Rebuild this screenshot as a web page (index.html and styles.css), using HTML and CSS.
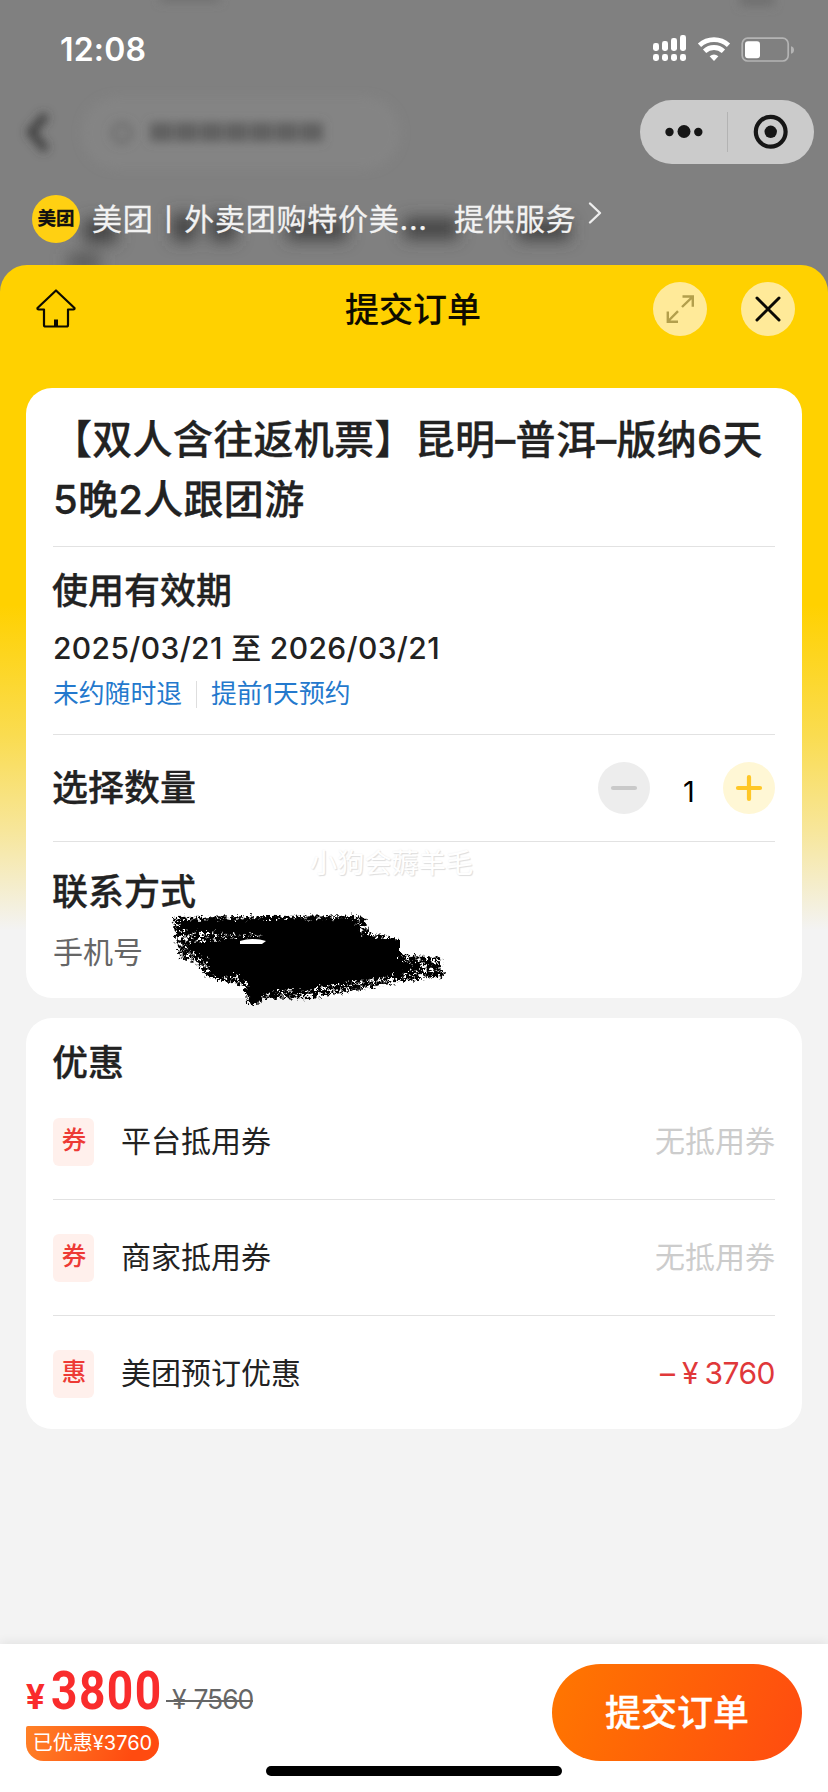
FILE: index.html
```html
<!DOCTYPE html>
<html lang="zh-CN">
<head>
<meta charset="utf-8">
<title>提交订单</title>
<link rel="stylesheet" href="styles.css">
</head>
<body>
<div class="screen">
  <div class="backdrop">
    <svg class="haze" width="828" height="300" viewBox="0 0 828 300">
      <defs><filter id="soft" filterUnits="userSpaceOnUse" x="0" y="-30" width="828" height="330"><feGaussianBlur stdDeviation="8"/></filter>
      <filter id="soft2" filterUnits="userSpaceOnUse" x="0" y="-30" width="828" height="330"><feGaussianBlur stdDeviation="5"/></filter></defs>
      <rect x="82" y="97" width="318" height="72" rx="36" fill="#848484" filter="url(#soft2)"/>
      <path d="M46 115L31 132L46 150" fill="none" stroke="#3c3c3c" stroke-width="8" filter="url(#soft2)"/>
      <circle cx="122" cy="133" r="9" fill="none" stroke="#6a6a6a" stroke-width="4" filter="url(#soft2)"/>
      <path d="M150 132H323" stroke="#606060" stroke-width="19" stroke-dasharray="23 2" filter="url(#soft2)"/>
      <g fill="#444" filter="url(#soft)">
        <rect x="84" y="219" width="33" height="24"/><rect x="172" y="214" width="24" height="27"/>
        <rect x="210" y="214" width="26" height="27"/><rect x="287" y="220" width="60" height="20"/>
        <rect x="404" y="218" width="54" height="21"/><rect x="518" y="220" width="52" height="20"/>
        <rect x="68" y="254" width="32" height="16" fill="#565656"/>
      </g>
      <g fill="#707070" filter="url(#soft2)"><rect x="160" y="-6" width="60" height="8"/><rect x="740" y="-6" width="34" height="12"/></g>
    </svg>
    <div class="status">
      <span class="clock">12:08</span>
      <svg width="142" height="30" viewBox="0 0 142 30" fill="#fff">
        <rect y="9" width="6" height="8" rx="2.4"/><rect x="9" y="7" width="6" height="10" rx="2.4"/><rect x="18" y="4" width="6" height="13" rx="2.4"/><rect x="27" y="1" width="6" height="16" rx="2.4"/>
        <rect y="20" width="6" height="7" rx="2.4"/><rect x="9" y="20" width="6" height="7" rx="2.4"/><rect x="18" y="20" width="6" height="7" rx="2.4"/><rect x="27" y="20" width="6" height="7" rx="2.4"/>
        <g fill="none" stroke="#fff" stroke-width="4.8"><path d="M46.500 11.300A21.500 21.500 0 0 1 75.500 11.300"/><path d="M51.600 17.200A13.800 13.800 0 0 1 70.400 17.200"/></g>
        <path d="M61 27L56.600 22.300Q61 18.600 65.400 22.300Z"/>
        <rect x="89.200" y="4.200" width="46" height="22.800" rx="5.500" fill="none" stroke="#b4b4b4" stroke-width="1.700"/>
        <rect x="92" y="7.200" width="15" height="17" rx="3"/>
        <path d="M138 12.200Q141 13 141 16Q141 19 138 19.800Z" fill="#b4b4b4"/>
      </svg>
    </div>
    <div class="capsule-row">
      <div class="capsule">
        <svg width="174" height="64" viewBox="0 0 174 64" fill="#161616">
          <circle cx="29.500" cy="32" r="4.200"/><circle cx="44" cy="31.500" r="6.500"/><circle cx="58.300" cy="32" r="4.200"/>
          <path d="M87.500 12V52" stroke="#b3b3b3" stroke-width="1"/>
          <circle cx="130.700" cy="31.800" r="14.900" fill="none" stroke="#161616" stroke-width="4.200"/><circle cx="130.700" cy="31.800" r="6.200"/>
        </svg>
      </div>
    </div>
    <div class="service">
      <span class="logo">美团</span>
      <span class="service-name">美团丨外卖团购特价美...</span>
      <span class="service-by">提供服务</span>
      <svg class="service-arrow" width="14" height="24" viewBox="0 0 14 24" fill="none" stroke="#eee" stroke-width="2.400" stroke-linecap="round" stroke-linejoin="round"><path d="M2 2.500L12 12L2 21.500"/></svg>
    </div>
  </div>

  <div class="sheet">
    <header class="topbar">
      <svg class="home" width="42" height="42" viewBox="0 0 42 42" fill="none" stroke="#0d0b00" stroke-width="2.200" stroke-linejoin="round"><path d="M21 2.500L39.500 20Q39.800 21.500 38.300 21.500H33V37Q33 38.500 31.500 38.500H10.500Q9 38.500 9 37V21.500H3.700Q2.200 21.500 2.500 20Z"/><path d="M21 31.500V38" stroke-width="4"/></svg>
      <h1>提交订单</h1>
      <div class="actions">
        <span class="round"><svg width="54" height="54" viewBox="0 0 54 54" fill="none" stroke="#b39f4c" stroke-width="2.400"><path d="M29 25L39.500 14.800M29.500 14.500H39.800V24.800M25 29.200L14.800 39.500M14.800 29.500V39.800H25"/></svg></span>
        <span class="round"><svg width="54" height="54" viewBox="0 0 54 54" fill="none" stroke="#0b0a04" stroke-width="3" stroke-linecap="round"><path d="M16 16L38 38M38 16L16 38"/></svg></span>
      </div>
    </header>

    <section class="card order">
      <h2 class="product">【双人含往返机票】昆明–普洱–版纳6天5晚2人跟团游</h2>
      <div class="validity">
        <h3>使用有效期</h3>
        <p class="dates">2025/03/21 至 2026/03/21</p>
        <p class="rules"><span>未约随时退</span><i></i><span>提前1天预约</span></p>
      </div>
      <div class="quantity">
        <h3>选择数量</h3>
        <div class="stepper">
          <span class="step minus"><svg width="52" height="52" viewBox="0 0 52 52" stroke="#c9c9c9" stroke-width="4.200" stroke-linecap="round"><path d="M15 26H37"/></svg></span>
          <span class="count">1</span>
          <span class="step plus"><svg width="52" height="52" viewBox="0 0 52 52" stroke="#ffc726" stroke-width="4.200" stroke-linecap="round"><path d="M15 26H37M26 15V37"/></svg></span>
        </div>
      </div>
      <div class="contact">
        <h3>联系方式</h3>
        <p>手机号</p>
        <span class="watermark">小狗会薅羊毛</span>
        <svg class="scribble" width="290" height="110" viewBox="0 0 290 110">
          <defs><filter id="chalk" x="-5%" y="-10%" width="110%" height="120%">
            <feTurbulence type="fractalNoise" baseFrequency="0.25" numOctaves="2" seed="4" result="n"/>
            <feDisplacementMap in="SourceGraphic" in2="n" scale="12" xChannelSelector="R" yChannelSelector="G"/>
            <feGaussianBlur stdDeviation="0.6"/>
          </filter>
          <filter id="grain" x="-5%" y="-10%" width="110%" height="120%">
            <feTurbulence type="fractalNoise" baseFrequency="0.28" numOctaves="2" seed="9"/>
            <feColorMatrix values="0 0 0 0 0  0 0 0 0 0  0 0 0 0 0  7 0 0 0 -2.600" result="m"/>
            <feComposite in="SourceGraphic" in2="m" operator="in" result="g"/>
            <feTurbulence type="fractalNoise" baseFrequency="0.3" numOctaves="2" seed="5" result="n"/>
            <feDisplacementMap in="g" in2="n" scale="9" xChannelSelector="R" yChannelSelector="G"/>
            <feGaussianBlur stdDeviation="0.6"/>
          </filter></defs>
          <path filter="url(#grain)" d="M12 9L203 7L209 22L215 25L236 31L238 46L281 49L284 69L240 74L200 82L155 90L105 91L98 96L86 96L84 77L48 70L34 54L20 50Z"/>
          <path filter="url(#chalk)" d="M17 12L192 10L202 26L232 33L239 37V52L260 56L260 63L230 67L190 74L150 81L106 84L97 95H89V76L86 69L50 65L48 51L36 45L30 39L22 35L64 31L104 27L20 23Z"/>
          <path filter="url(#chalk)" d="M76 34H105V30H225L240 32V66L86 73L80 68H50L48 54L46 37Z"/>
          <path d="M80 33Q92 29 106 33L102 36H80Z" fill="#fff"/>
        </svg>
      </div>
    </section>

    <section class="card discounts">
      <h3>优惠</h3>
      <div class="row"><span class="badge">券</span><span class="label">平台抵用券</span><span class="none">无抵用券</span></div>
      <div class="row"><span class="badge">券</span><span class="label">商家抵用券</span><span class="none">无抵用券</span></div>
      <div class="row"><span class="badge">惠</span><span class="label">美团预订优惠</span><span class="off">–<b>¥</b>3760</span></div>
    </section>
  </div>

  <footer class="paybar">
    <div class="total">
      <div class="prices"><span class="yen">¥</span><span class="amount">3800</span><span class="was"><b>¥</b>7560</span></div>
      <span class="saved">已优惠¥3760</span>
    </div>
    <button class="submit">提交订单</button>
    <div class="indicator"></div>
  </footer>
</div>
</body>
</html>
```
FILE: styles.css
```css
* { box-sizing: border-box; margin: 0; padding: 0; }
body { width: 828px; height: 1792px; overflow: hidden; font-family: Inter, "Noto Sans CJK SC", sans-serif; color: #222; }
svg { display: block; }
h1, h2, h3 { font-weight: 500; -webkit-text-stroke: .3px currentColor; }
.screen { display: flex; flex-direction: column; width: 828px; height: 1792px; background: #808080; }

.backdrop { position: relative; height: 265px; flex: none; }
.haze { position: absolute; left: 0; top: 0; }
.status { position: relative; display: flex; justify-content: space-between; height: 100px; padding: 34px 33px 0 60px; }
.clock { font-size: 32px; line-height: 32px; font-weight: 600; color: #fff; letter-spacing: .2px; }
.capsule-row { position: relative; display: flex; justify-content: flex-end; padding-right: 14px; }
.capsule { width: 174px; height: 64px; border-radius: 32px; background: #cbcbcb; }
.service { position: relative; display: flex; align-items: center; height: 48px; margin-top: 31px; padding-left: 32px; color: #f2f2f2; font-size: 30px; line-height: 48px; white-space: nowrap; -webkit-text-stroke: .3px currentColor; }
.logo { width: 48px; height: 48px; border-radius: 50%; background: #ffd012; color: #111; font-size: 18.500px; line-height: 46px; font-weight: 700; text-align: center; }
.service-name { width: 362px; margin-left: 12px; letter-spacing: .75px; }
.service-by { width: 121px; letter-spacing: .5px; }
.service-arrow { margin: -12px 0 0 13px; }

.sheet { position: relative; flex: 1; border-radius: 27px 27px 0 0; padding: 0 26px; background: linear-gradient(#ffd100 0, #ffd100 340px, #fadc50 470px, #f7e69a 565px, #f3f3f3 665px); }
.topbar { display: flex; align-items: center; justify-content: space-between; height: 88px; margin-bottom: 35px; padding: 0 7px 0 9px; }
.home { margin-right: 96px; }
.topbar h1 { color: #0d0b00; font-size: 34px; line-height: 50px; padding-top: 1px; -webkit-text-stroke: .1px currentColor; }
.actions { display: flex; gap: 34px; }
.round { width: 54px; height: 54px; border-radius: 50%; background: #ffea99; }

.card { border-radius: 26px; background: #fff; padding: 0 27px; }
.order { height: 610px; margin-bottom: 20px; }
.card h3 { margin-left: -1px; font-size: 36px; line-height: 50px; }
.product { height: 159px; padding-top: 22px; font-size: 40px; line-height: 60px; letter-spacing: .3px; text-indent: -1px; border-bottom: 1px solid #e2e2e2; }
.validity { height: 188px; padding-top: 19px; border-bottom: 1px solid #e2e2e2; }
.dates { margin-top: 12px; font-size: 30px; line-height: 40px; font-weight: 500; letter-spacing: .36px; white-space: nowrap; }
.rules { display: flex; align-items: center; margin-top: 8px; font-size: 25.800px; line-height: 36px; color: #2479cd; }
.rules i { width: 1px; height: 27px; margin: 0 14px; background: #dedede; }
.quantity { display: flex; align-items: center; justify-content: space-between; height: 107px; border-bottom: 1px solid #e2e2e2; }
.stepper { display: flex; align-items: center; }
.step { width: 52px; height: 52px; border-radius: 50%; }
.minus { background: #ededed; }
.plus { background: #fff7d5; }
.count { width: 73px; padding: 8px 0 0 5px; text-align: center; font: 29px/36px Inter, sans-serif; color: #000; }
.contact { position: relative; padding-top: 25px; }
.contact p { margin-top: 13px; font-size: 30px; line-height: 44px; color: #666; }
.watermark { position: absolute; left: 257px; top: 4px; font-size: 27.200px; line-height: 36px; color: #fff; text-shadow: 1px 1px 1px #ddd, 0 0 2px #eee; }
.scribble { position: absolute; left: 107px; top: 66px; }

.discounts { height: 411px; padding-top: 20px; }
.discounts h3 { margin-bottom: -4px; }
.row { display: flex; align-items: center; height: 116px; border-bottom: 1px solid #e2e2e2; font-size: 30px; }
.row:last-child { border-bottom: 0; height: 115px; }
.badge { width: 41px; height: 48px; border-radius: 6px; background: #fff0ec; color: #ed3a35; font-size: 24.500px; line-height: 45px; font-weight: 500; text-align: center; padding-left: 1px; }
.label { margin-left: 27px; flex: 1; padding-bottom: 5px; }
.none { color: #ccc; padding-bottom: 5px; }
.off { color: #e0383a; letter-spacing: -.5px; padding-bottom: 1px; }
.off b { margin: 0 6.500px 0 7.500px; font-weight: 400; }

.paybar { position: relative; flex: none; display: flex; justify-content: space-between; height: 148px; padding: 20px 26px 0; background: #fff; box-shadow: 0 -2px 10px rgba(0,0,0,.07); }
.prices { display: flex; align-items: baseline; height: 62px; padding-top: 2px; color: #f92c2c; font-family: Roboto, sans-serif; font-weight: 700; line-height: 50px; }
.yen { width: 25px; font-size: 35px; }
.amount { width: 115px; font-size: 53px; letter-spacing: 1.700px; transform: scaleX(.87); transform-origin: left; }
.was { position: relative; font: 400 26.500px/30px Inter, sans-serif; letter-spacing: -1.100px; color: #666; }
.was b { margin: 0 8px 0 6px; font-weight: 400; }
.was::after { content: ""; position: absolute; left: 0; right: 0; top: 16px; height: 2px; background: #666; }
.saved { display: block; width: 133px; height: 35px; border-radius: 2px 18px 18px 18px; background: linear-gradient(110deg, #ff8127, #ff4b10 80%); color: #fff; font-size: 20px; line-height: 34px; text-align: center; white-space: nowrap; }
.submit { width: 250px; height: 97px; border: 0; border-radius: 49px; background: linear-gradient(110deg, #ff7700, #ff4b10); color: #fff; font: 500 36px/50px Inter, "Noto Sans CJK SC", sans-serif; -webkit-text-stroke: .3px #fff; }
.indicator { position: absolute; left: 266px; top: 122px; width: 296px; height: 10px; border-radius: 5px; background: #000; }
```
